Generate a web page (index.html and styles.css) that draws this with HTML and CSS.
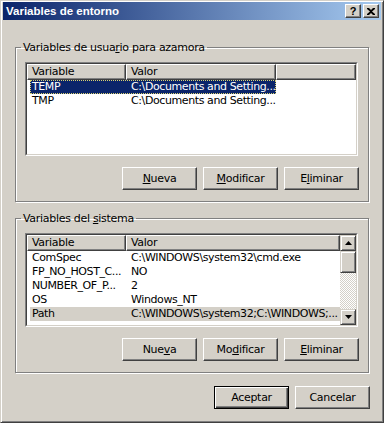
FILE: index.html
```html
<!DOCTYPE html>
<html lang="es">
<head>
    <meta charset="UTF-8">
    <title>Variables de entorno</title>
    <link rel="stylesheet" href="styles.css">
</head>
<body>
    <div class="window">
        <div class="titlebar">
            <span class="title">Variables de entorno</span>
            <div class="caption-btns">
                <button class="cap-btn">?</button>
                <button class="cap-btn">
                    <svg width="8" height="7" viewBox="0 0 8 7"><path d="M0 0h2l2 2 2-2h2v1L5 3.5 8 6v1H6L4 5 2 7H0V6l3-2.5L0 1z" fill="#000"/></svg>
                </button>
            </div>
        </div>

        <div class="content">
            <!-- user variables -->
            <fieldset class="group">
                <legend>Variables de usua<u>r</u>io para azamora</legend>
                <div class="listview">
                    <div class="lv-inner">
                        <div class="lv-main">
                            <div class="lv-header">
                                <span class="hcol c1">Variable</span>
                                <span class="hcol c2">Valor</span>
                                <span class="hcol c3"></span>
                            </div>
                            <div class="row selected focused">
                                <span class="cell c1">TEMP</span>
                                <span class="cell c2">C:\Documents and Setting...</span>
                            </div>
                            <div class="row">
                                <span class="cell c1">TMP</span>
                                <span class="cell c2">C:\Documents and Setting...</span>
                            </div>
                        </div>
                    </div>
                </div>
                <div class="btn-row">
                    <button class="btn"><u>N</u>ueva</button>
                    <button class="btn"><u>M</u>odificar</button>
                    <button class="btn">E<u>l</u>iminar</button>
                </div>
            </fieldset>

            <!-- system variables -->
            <fieldset class="group group-sys">
                <legend>Variables del <u>s</u>istema</legend>
                <div class="listview">
                    <div class="lv-inner">
                        <div class="lv-main">
                            <div class="lv-header">
                                <span class="hcol c1">Variable</span>
                                <span class="hcol c2 wide">Valor</span>
                            </div>
                            <div class="row wide-row">
                                <span class="cell c1">ComSpec</span>
                                <span class="cell c2">C:\WINDOWS\system32\cmd.exe</span>
                            </div>
                            <div class="row wide-row">
                                <span class="cell c1">FP_NO_HOST_C...</span>
                                <span class="cell c2">NO</span>
                            </div>
                            <div class="row wide-row">
                                <span class="cell c1">NUMBER_OF_P...</span>
                                <span class="cell c2">2</span>
                            </div>
                            <div class="row wide-row">
                                <span class="cell c1">OS</span>
                                <span class="cell c2">Windows_NT</span>
                            </div>
                            <div class="row wide-row inactive">
                                <span class="cell c1">Path</span>
                                <span class="cell c2">C:\WINDOWS\system32;C:\WINDOWS;...</span>
                            </div>
                        </div>
                        <div class="scrollbar">
                            <div class="sb-btn">
                                <svg width="7" height="4" viewBox="0 0 7 4"><path d="M3.5 0L7 4H0z" fill="#000"/></svg>
                            </div>
                            <div class="sb-thumb"></div>
                            <div class="sb-track"></div>
                            <div class="sb-btn">
                                <svg width="7" height="4" viewBox="0 0 7 4"><path d="M0 0h7L3.5 4z" fill="#000"/></svg>
                            </div>
                        </div>
                    </div>
                </div>
                <div class="btn-row">
                    <button class="btn">Nue<u>v</u>a</button>
                    <button class="btn">Mo<u>d</u>ificar</button>
                    <button class="btn"><u>E</u>liminar</button>
                </div>
            </fieldset>

            <div class="dialog-btns">
                <button class="btn default">Aceptar</button>
                <button class="btn">Cancelar</button>
            </div>
        </div>
    </div>
</body>
</html>
```

FILE: styles.css
```css
body {
    margin: 0;
    padding: 0;
    font-family: "DejaVu Sans", Verdana, sans-serif;
    font-size: 11px;
    letter-spacing: -0.3px;
    color: #000;
    background-color: #d4d0c8;
}

u {
    text-decoration: underline;
    text-underline-offset: 1px;
}

.window {
    width: 384px;
    height: 423px;
    box-sizing: border-box;
    background-color: #d4d0c8;
    border: 1px solid;
    border-color: #d4d0c8 #404040 #404040 #d4d0c8;
    box-shadow: inset 1px 1px 0 #fff, inset -1px -1px 0 #808080;
    padding: 1px 2px 2px 2px;
}

/* Title bar */
.titlebar {
    height: 18px;
    display: flex;
    align-items: center;
    justify-content: space-between;
    background: linear-gradient(to right, #0a246a, #a6caf0);
    padding: 0 2px 0 3px;
}

.title {
    color: #fff;
    font-family: "Liberation Sans", Arial, sans-serif;
    font-weight: bold;
    font-size: 11.5px;
    letter-spacing: 0;
}

.caption-btns {
    display: flex;
    gap: 2px;
}

.cap-btn {
    width: 16px;
    height: 14px;
    padding: 0;
    margin: 0;
    box-sizing: border-box;
    display: flex;
    align-items: center;
    justify-content: center;
    background-color: #d4d0c8;
    border: 1px solid;
    border-color: #fff #404040 #404040 #fff;
    box-shadow: inset -1px -1px 0 #808080;
    font-family: "Liberation Sans", Arial, sans-serif;
    font-weight: bold;
    font-size: 11px;
    line-height: 12px;
    color: #000;
}

/* Content */
.content {
    padding: 21px 12px 0 12px;
}

.group {
    width: 354px;
    box-sizing: border-box;
    margin: 0;
    padding: 8px 10px 11px 9px;
    border: 1px solid #808080;
    box-shadow: inset 1px 1px 0 #fff, 1px 1px 0 #fff;
    min-width: 0;
}

.group legend {
    padding: 0 2px;
    margin-left: -4px;
    line-height: 13px;
}

.group-sys {
    margin-top: 10px;
}

/* List view */
.listview {
    height: 94px;
    box-sizing: border-box;
    border: 1px solid;
    border-color: #808080 #fff #fff #808080;
}

.lv-inner {
    height: 100%;
    box-sizing: border-box;
    border: 1px solid;
    border-color: #404040 #d4d0c8 #d4d0c8 #404040;
    background-color: #fff;
    display: flex;
}

.lv-main {
    flex: 1;
    min-width: 0;
}

.lv-header {
    display: flex;
    height: 16px;
}

.hcol {
    box-sizing: border-box;
    height: 16px;
    line-height: 14px;
    padding-left: 4px;
    background-color: #d4d0c8;
    border: 1px solid;
    border-color: #fff #404040 #404040 #fff;
    box-shadow: inset -1px -1px 0 #808080;
    white-space: nowrap;
}

.hcol.c1 {
    width: 99px;
}

.hcol.c2 {
    width: 150px;
}

.hcol.c3 {
    flex: 1;
}

.hcol.wide {
    flex: 1;
}

.row {
    display: flex;
    height: 14px;
    line-height: 14px;
    width: 246px;
    margin-left: 3px;
    box-sizing: border-box;
    white-space: nowrap;
    letter-spacing: -0.4px;
}

.row.wide-row {
    width: auto;
}

.cell.c1 {
    width: 96px;
    flex-shrink: 0;
    padding-left: 2px;
    box-sizing: border-box;
}

.cell.c2 {
    padding-left: 5px;
    flex: 1;
    min-width: 0;
}

.row.selected {
    background-color: #0a246a;
    color: #fff;
}

.row.focused {
    outline: 1px dotted #d8d070;
    outline-offset: -1px;
}

.row.inactive {
    background-color: #d4d0c8;
}

/* Scrollbar */
.scrollbar {
    width: 16px;
    display: flex;
    flex-direction: column;
}

.sb-btn,
.sb-thumb {
    box-sizing: border-box;
    background-color: #d4d0c8;
    border: 1px solid;
    border-color: #d4d0c8 #404040 #404040 #d4d0c8;
    box-shadow: inset 1px 1px 0 #fff, inset -1px -1px 0 #808080;
}

.sb-btn {
    height: 16px;
    display: flex;
    align-items: center;
    justify-content: center;
}

.sb-thumb {
    height: 22px;
}

.sb-track {
    flex: 1;
    background: repeating-conic-gradient(#d4d0c8 0 25%, #fff 0 50%) 0 0 / 2px 2px;
}

/* Buttons */
.btn-row {
    display: flex;
    justify-content: flex-end;
    gap: 6px;
    margin-top: 11px;
    margin-right: -1px;
}

.btn {
    width: 75px;
    height: 23px;
    box-sizing: border-box;
    padding: 0;
    margin: 0;
    background-color: #d4d0c8;
    border: 1px solid;
    border-color: #fff #404040 #404040 #fff;
    box-shadow: inset -1px -1px 0 #808080;
    font-family: "DejaVu Sans", Verdana, sans-serif;
    font-size: 11px;
    letter-spacing: -0.3px;
    color: #000;
}

.btn.default {
    border: 1px solid #000;
    box-shadow: inset 1px 1px 0 #fff, inset -1px -1px 0 #404040, inset -2px -2px 0 #808080;
}

.dialog-btns {
    display: flex;
    justify-content: flex-end;
    gap: 6px;
    margin-top: 13px;
    width: 355px;
}
```
